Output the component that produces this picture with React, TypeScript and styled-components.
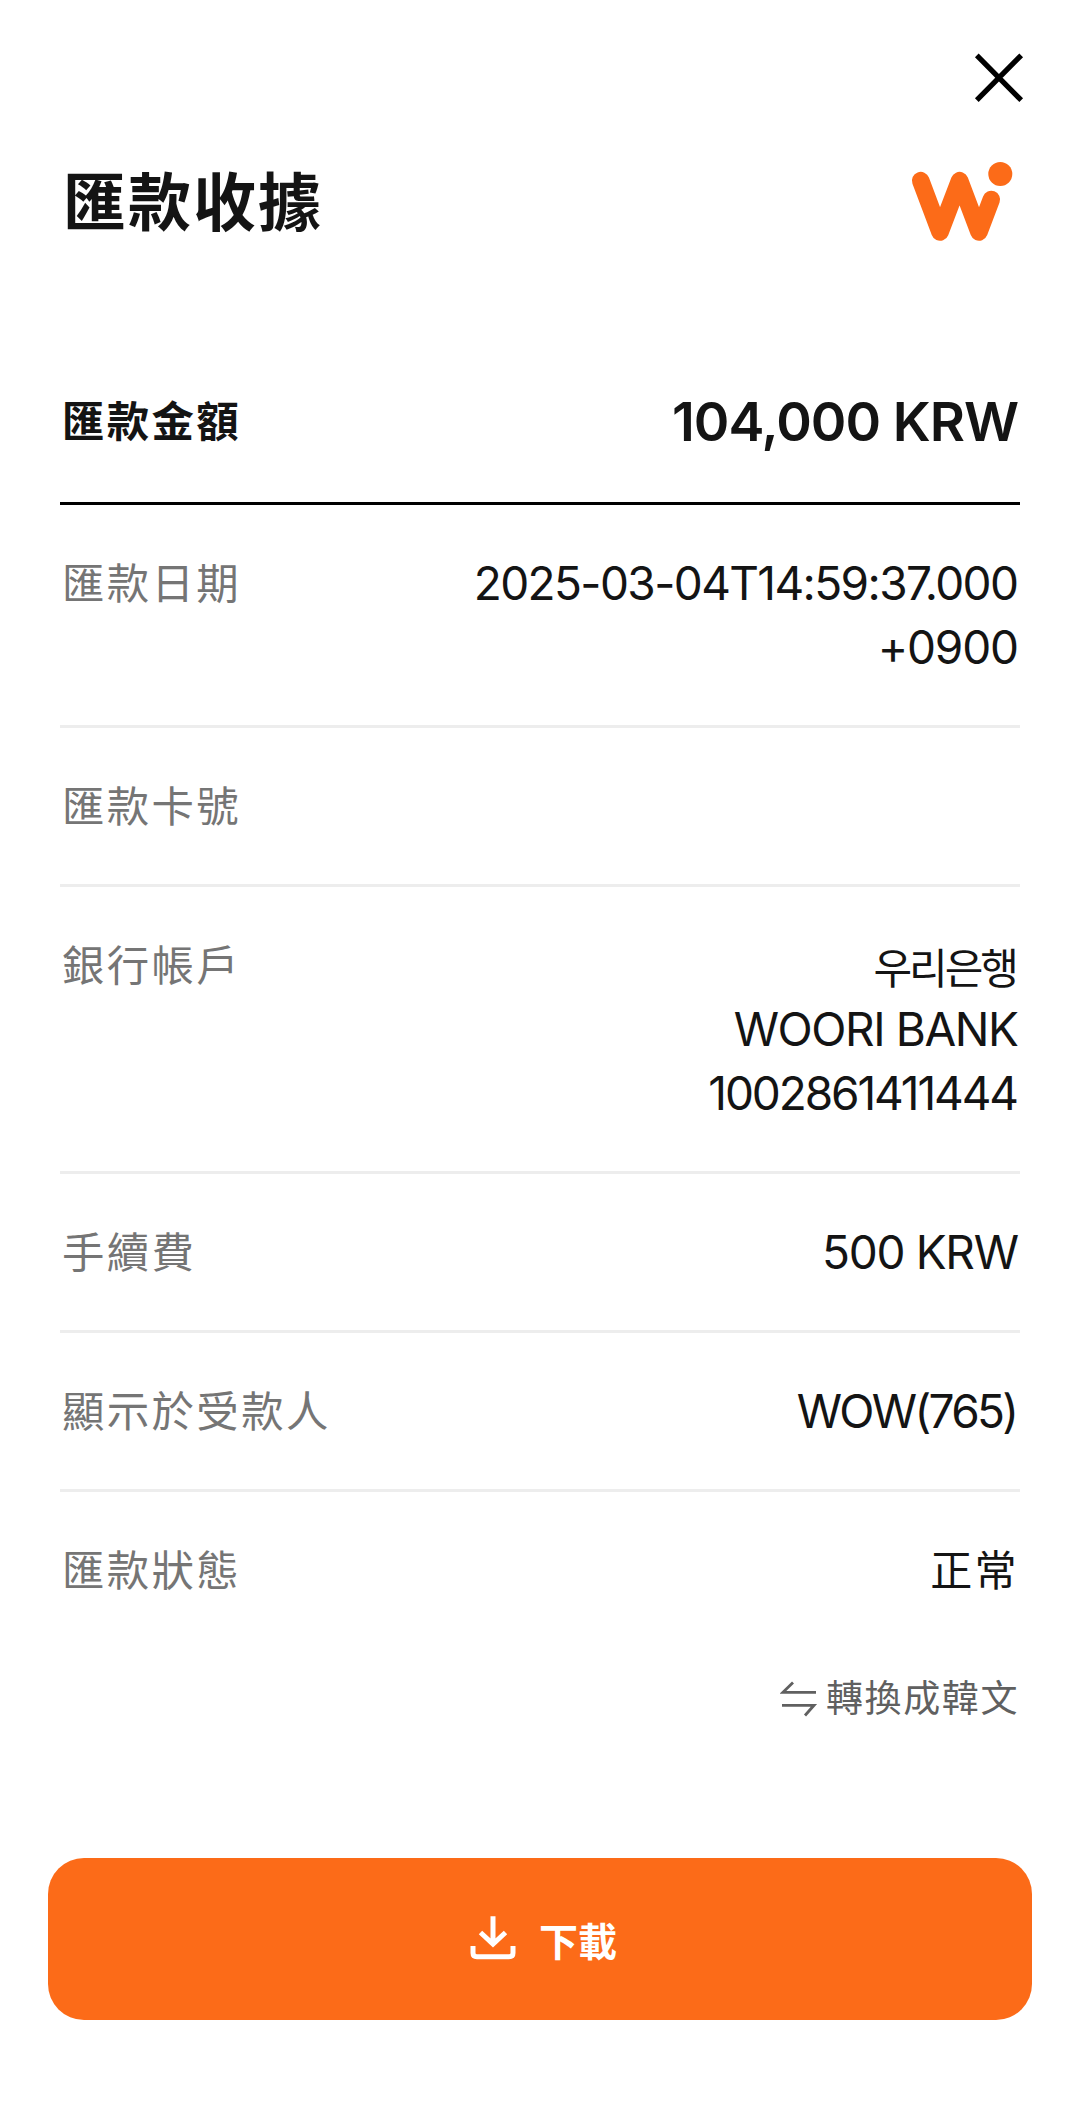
import React from 'react';
import styled, { createGlobalStyle } from 'styled-components';

const GlobalStyle = createGlobalStyle`
  *, *::before, *::after { box-sizing: border-box; }
  body {
    margin: 0;
    background: #fff;
    color: #141414;
    font-family: Inter, 'Noto Sans CJK TC', 'Noto Sans CJK KR', sans-serif;
  }
`;

const Page = styled.main`
  display: flex;
  flex-direction: column;
  width: 1080px;
  height: 2116px;
  background: #fff;
`;

const TopBar = styled.div`
  display: flex;
  justify-content: flex-end;
  padding: 48px 50px 0 0;
  height: 156px;
`;

const CloseButton = styled.button`
  width: 60px;
  height: 60px;
  padding: 0;
  border: 0;
  background: none;
  svg { display: block; }
`;

const Header = styled.header`
  display: flex;
  justify-content: space-between;
  align-items: flex-start;
  height: 187px;
  padding: 0 64px 0 63px;
`;

const Title = styled.h1`
  margin: 0;
  font-size: 63px;
  line-height: 92px;
  letter-spacing: 2px;
  font-weight: 700;
`;

const Logo = styled.svg`
  display: block;
  width: 110px;
  height: 90px;
`;

const Receipt = styled.dl`
  margin: 0 60px;
`;

const Row = styled.div<{ $strong?: boolean; $last?: boolean }>`
  display: flex;
  justify-content: space-between;
  min-height: 156px;
  padding: ${p => (p.$strong ? '47px 0 48px' : '46px 0')};
  border-bottom: ${p => (p.$last ? '0' : p.$strong ? '3px solid #000' : '3px solid #ededed')};
`;

const Label = styled.dt<{ $strong?: boolean }>`
  padding: ${p => (p.$strong ? '0 0 0 2px' : '2px 0 0 2px')};
  font-size: 42.4px;
  line-height: ${p => (p.$strong ? 64 : 62)}px;
  letter-spacing: 2.4px;
  font-weight: ${p => (p.$strong ? 700 : 400)};
  color: ${p => (p.$strong ? '#141414' : '#757575')};
`;

const Value = styled.dd<{ $strong?: boolean }>`
  display: flex;
  flex-direction: column;
  align-items: flex-end;
  margin: 0;
  padding-right: 1px;
  font-size: ${p => (p.$strong ? 54 : 46)}px;
  line-height: 64px;
  font-weight: ${p => (p.$strong ? 600 : 400)};
`;

const Line = styled.span<{ $track?: number; $size?: number; $drop?: number }>`
  white-space: nowrap;
  letter-spacing: ${p => p.$track ?? 0}px;
  margin-right: ${p => Math.max(0, -(p.$track ?? 0))}px;
  padding-top: ${p => (p.$drop ?? 0) * 2}px;
  line-height: ${p => 64 - (p.$drop ?? 0) * 2}px;
  ${p => (p.$size ? `font-size: ${p.$size}px;` : '')}
`;

const Convert = styled.button`
  display: flex;
  align-items: center;
  align-self: flex-end;
  gap: 8px;
  height: 60px;
  margin: 21px 61px 0 0;
  padding: 0;
  border: 0;
  background: none;
  color: #606060;
  font: inherit;
  font-size: 37px;
  line-height: 60px;
  letter-spacing: 1.6px;
`;

const Download = styled.button`
  display: flex;
  align-items: center;
  justify-content: center;
  gap: 22px;
  height: 162px;
  margin: 129px 48px 0;
  padding: 0 0 0 6px;
  border: 0;
  border-radius: 36px;
  background: #fc6b18;
  color: #fff;
  font: inherit;
  font-size: 39px;
  font-weight: 700;
`;

type Text = { text: string; track?: number; size?: number; drop?: number };
type Entry = { label: string; lines: Text[]; strong?: boolean };

const entries: Entry[] = [
  { label: '匯款金額', lines: [{ text: '104,000 KRW', track: -1 }], strong: true },
  {
    label: '匯款日期',
    lines: [{ text: '2025-03-04T14:59:37.000', track: -1.6 }, { text: '+0900', track: -1.2 }],
  },
  { label: '匯款卡號', lines: [] },
  {
    label: '銀行帳戶',
    lines: [
      { text: '우리은행', track: -3, size: 42, drop: 4 },
      { text: 'WOORI BANK', track: -1.4 },
      { text: '1002861411444', track: -2.1 },
    ],
  },
  { label: '手續費', lines: [{ text: '500 KRW', track: -1.3 }] },
  { label: '顯示於受款人', lines: [{ text: 'WOW(765)', track: -2.7 }] },
  { label: '匯款狀態', lines: [{ text: '正常', track: 2.4, size: 42, drop: 0.5 }] },
];

export default function App() {
  return (
    <Page>
      <GlobalStyle />
      <TopBar>
        <CloseButton aria-label="close">
          <svg width="60" height="60" viewBox="0 0 60 60" fill="none" stroke="#000" strokeWidth="5.2">
            <path d="M6.8 7.3 51.2 52.2M51.2 7.3 6.8 52.2" />
          </svg>
        </CloseButton>
      </TopBar>
      <Header>
        <Title>匯款收據</Title>
        <Logo viewBox="0 0 110 90">
          <path
            d="M14.7 24.7 34 76 53.6 24.7 73 76 85.3 43.5"
            fill="none"
            stroke="#fc6b18"
            strokeWidth="17.6"
            strokeLinecap="round"
            strokeLinejoin="round"
          />
          <circle cx="94.3" cy="18" r="12" fill="#fc6b18" />
        </Logo>
      </Header>
      <Receipt>
        {entries.map((e, i) => (
          <Row key={e.label} $strong={e.strong} $last={i === entries.length - 1}>
            <Label $strong={e.strong}>{e.label}</Label>
            <Value $strong={e.strong}>
              {e.lines.map(l => (
                <Line key={l.text} $track={l.track} $size={l.size} $drop={l.drop}>{l.text}</Line>
              ))}
            </Value>
          </Row>
        ))}
      </Receipt>
      <Convert>
        <svg width="38" height="38" viewBox="0 0 38 38" fill="none" stroke="currentColor" strokeWidth="2.8">
          <path d="M36 12.3H3L13 2.500M2 25.300H34L25 35.500" />
        </svg>
        轉換成韓文
      </Convert>
      <Download>
        <svg width="48" height="48" viewBox="0 0 48 48" fill="none" stroke="currentColor" strokeWidth="5">
          <path d="M24 1.300V29.500M11.500 17.500 24 29 36.500 17.500M4 31V38Q4 41.700 8 41.700H40Q44 41.700 44 38V31" />
        </svg>
        下載
      </Download>
    </Page>
  );
}
